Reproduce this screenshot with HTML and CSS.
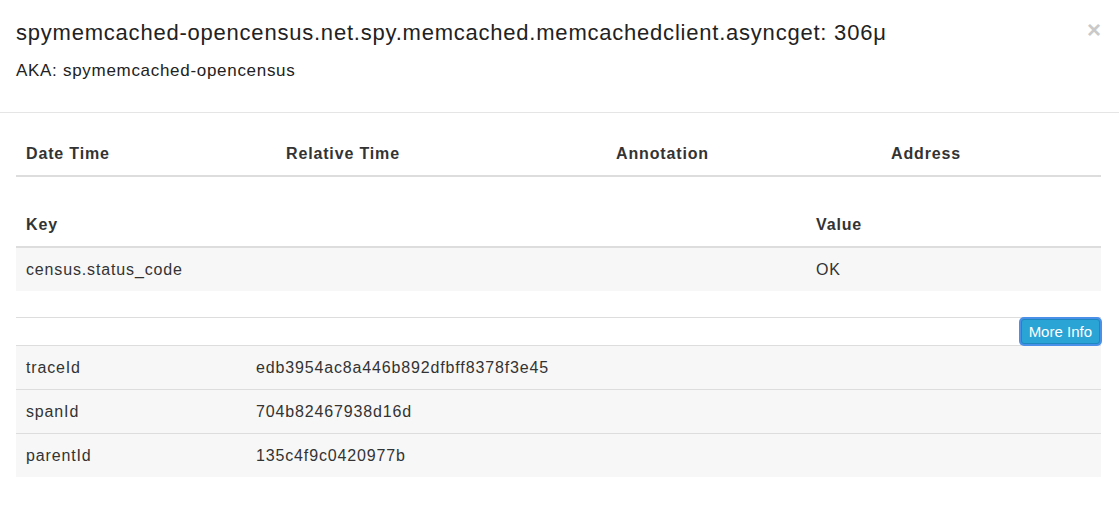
FILE: index.html
```html
<!DOCTYPE html>
<html>
<head>
<meta charset="utf-8">
<link rel="stylesheet" href="styles.css">
</head>
<body>
<div class="modal">
  <div class="modal-header">
    <button class="close" type="button">×</button>
    <h4 class="modal-title">spymemcached-opencensus.net.spy.memcached.memcachedclient.asyncget: 306μ</h4>
    <div class="aka">AKA: spymemcached-opencensus</div>
  </div>
  <div class="modal-body">
    <table class="table annotations">
      <thead>
        <tr><th class="c-date">Date Time</th><th class="c-rel">Relative Time</th><th class="c-ann">Annotation</th><th>Address</th></tr>
      </thead>
    </table>
    <table class="table tags">
      <thead>
        <tr><th class="c-key">Key</th><th>Value</th></tr>
      </thead>
      <tbody>
        <tr class="striped"><td>census.status_code</td><td>OK</td></tr>
      </tbody>
    </table>
    <table class="table ids">
      <tbody>
        <tr class="btn-row"><td></td><td class="btn-cell"><button class="btn-info" type="button">More Info</button></td></tr>
        <tr class="striped"><td class="c-id">traceId</td><td>edb3954ac8a446b892dfbff8378f3e45</td></tr>
        <tr class="striped"><td class="c-id">spanId</td><td>704b82467938d16d</td></tr>
        <tr class="striped"><td class="c-id">parentId</td><td>135c4f9c0420977b</td></tr>
      </tbody>
    </table>
  </div>
</div>
</body>
</html>
```
FILE: styles.css
```css
html, body {
  margin: 0;
  padding: 0;
  background: #fff;
}
body {
  font-family: "Liberation Sans", Arial, Helvetica, sans-serif;
  color: #333;
  font-size: 16px;
}
.modal {
  width: 1119px;
}
.modal-header {
  padding: 18px 16px 30px;
  border-bottom: 1px solid #e5e5e5;
  position: relative;
}
.modal-title {
  margin: 0 0 12px;
  font-size: 22px;
  font-weight: normal;
  line-height: 30px;
  letter-spacing: 0.78px;
  color: #222;
}
.aka {
  font-size: 17px;
  line-height: 22px;
  letter-spacing: 0.7px;
  color: #222;
  margin-top: 1px;
}
.close {
  position: absolute;
  top: 16px;
  right: 18px;
  border: 0;
  background: transparent;
  padding: 0;
  font-family: "Liberation Sans", Arial, sans-serif;
  font-size: 24px;
  font-weight: bold;
  line-height: 28px;
  color: #c9c9c9;
}
.modal-body {
  padding: 20px 18px 40px 16px;
}
.table {
  width: 100%;
  border-collapse: collapse;
  border-spacing: 0;
}
.table th {
  text-align: left;
  font-weight: bold;
  padding: 10px;
  line-height: 22px;
  letter-spacing: 0.85px;
  border-bottom: 2px solid #ddd;
}
.table td {
  padding: 10px;
  line-height: 23px;
  letter-spacing: 0.85px;
}
.annotations {
  margin-bottom: 27px;
}
.annotations .c-date { width: 240px; }
.annotations .c-rel { width: 310px; }
.annotations .c-ann { width: 255px; }
.tags {
  margin-bottom: 26px;
}
.tags .c-key { width: 770px; }
.striped td {
  background: #f7f7f7;
}
.ids td {
  border-top: 1px solid #ddd;
}
.ids .c-id { width: 210px; }
.btn-row td {
  padding: 0;
  line-height: 0;
  letter-spacing: 0;
}
.btn-cell {
  text-align: right;
}
.btn-info {
  display: inline-block;
  margin: 1px 1px 1px 0;
  height: 25px;
  padding: 0 7px;
  font-family: "Liberation Sans", Arial, sans-serif;
  font-size: 15px;
  line-height: 23px;
  color: #fff;
  background: #2aa3d5;
  border: 1px solid #1d87c0;
  border-radius: 3px;
  box-shadow: 0 0 0 2px #4a8fe8;
  vertical-align: top;
}
```
